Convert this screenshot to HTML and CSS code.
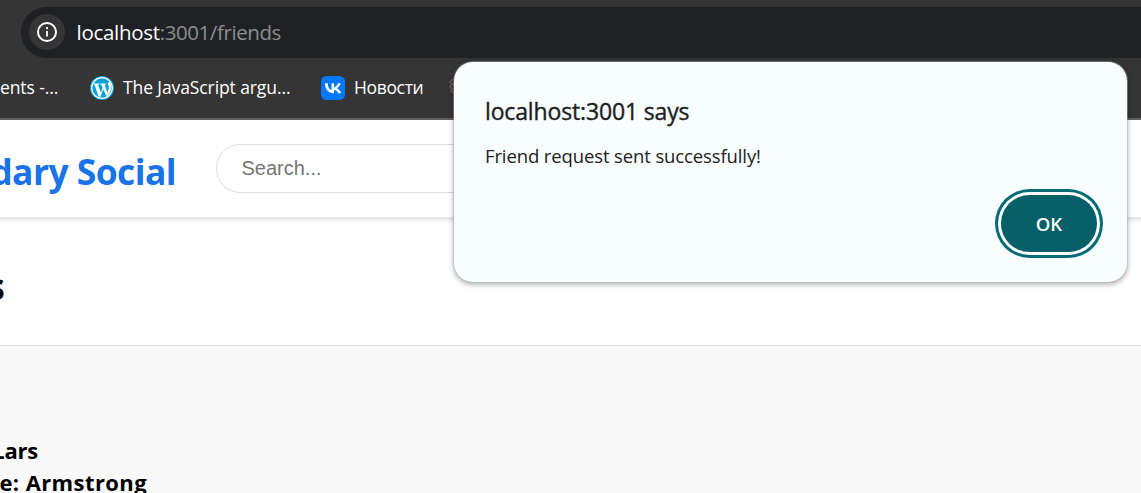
FILE: index.html
```html
<!DOCTYPE html>
<html lang="en">
<head>
<meta charset="utf-8">
<title>Friends</title>
<link rel="stylesheet" href="styles.css">
</head>
<body>
<div class="browser">
  <div class="address-bar">
    <span class="site-info">
      <svg width="22" height="22" viewBox="0 0 22 22"><circle cx="11" cy="11" r="9" fill="none" stroke="#fff" stroke-width="2"/><path d="M11 10v5.5M11 6v2.2" stroke="#fff" stroke-width="1.8"/></svg>
    </span>
    <span class="url"><span class="host">localhost</span><span class="path">:3001/friends</span></span>
  </div>
  <div class="bookmarks">
    <span class="bookmark bookmark-cut"><span class="label">ents -...</span></span>
    <span class="bookmark bookmark-wp">
      <svg width="24" height="24" viewBox="0 0 24 24"><circle cx="12" cy="12" r="12" fill="#0aa0d8"/><circle cx="12" cy="12" r="10.3" fill="none" stroke="#fff" stroke-width="1.2"/><path d="M3.6 7.5h5.700v1H8l3 8.300 1.700-4.800L11.300 8.500H10v-1h6v1h-1.500l3 8.300 1.300-4.200c.7-2.200-.9-3.200-.9-4.800 0-1.200.8-1.900 1.700-2 2 3 2.200 7.500.4 10.600-.8 1.500-2 2.700-3.500 3.500L13.200 13.500 10.400 21 8.400 20.200 4.500 8.500h-.9z" fill="#fff"/></svg>
      <span class="label">The JavaScript argu...</span>
    </span>
    <span class="bookmark bookmark-vk">
      <svg width="24" height="24" viewBox="0 0 24 24"><rect width="24" height="24" rx="5.5" fill="#0077ff"/><path d="M12.800 17.300C7.300 17.300 4.200 13.500 4 7.300h2.800c.1 4.500 2.100 6.400 3.700 6.800V7.300h2.600v3.900c1.600-.2 3.200-1.900 3.800-3.900h2.600c-.4 2.400-2.200 4.200-3.500 4.900 1.300.6 3.300 2.200 4.100 5.100h-2.900c-.6-1.900-2.100-3.400-4.100-3.600v3.600z" fill="#fff"/></svg>
      <span class="label">Новости</span>
    </span>
    <svg class="next-icon" width="24" height="24" viewBox="0 0 24 24"><path d="M5 3L2 6l2 2-2 3 2 2-1 2 3 2M7 5L5 8l2 3-1 3" fill="none" stroke="#625a5d" stroke-width="1.5"/></svg>
  </div>
</div>
<header class="site-header">
  <div class="brand">Legendary Social</div>
  <input class="search" type="text" placeholder="Search...">
</header>
<section class="title-row"><h1>Friends</h1></section>
<main class="friends">
  <p class="first-name">Name: Lars</p>
  <p class="last-name">Surname: Armstrong</p>
</main>
<div class="dialog" role="alertdialog">
  <h2>localhost:3001 says</h2>
  <p>Friend request sent successfully!</p>
  <div class="actions"><button class="ok">OK</button></div>
</div>
</body>
</html>
```
FILE: styles.css
```css
* { box-sizing: border-box; }
body {
  margin: 0;
  width: 1141px;
  height: 493px;
  overflow: hidden;
  display: flex;
  flex-direction: column;
  background: #fff;
  font-family: "Open Sans", "Noto Sans", sans-serif;
  white-space: nowrap;
}
.browser {
  flex: none;
  height: 120px;
  padding-top: 7px;
  background: #353535;
  border-bottom: 2px solid #656162;
}
.address-bar {
  display: flex;
  align-items: center;
  gap: 12px;
  height: 51px;
  margin-left: 21px;
  padding: 0 0 1px 7.500px;
  border-radius: 26px 0 0 26px;
  background: #202124;
}
.site-info {
  display: flex;
  align-items: center;
  justify-content: center;
  width: 36px;
  height: 36px;
  border-radius: 50%;
  background: #353535;
}
.url { display: flex; padding-bottom: 1px; font-size: 20.5px; }
.host { color: #fff; letter-spacing: -0.3px; }
.path { color: #8c8d8f; letter-spacing: -0.42px; }
.bookmarks { display: flex; align-items: center; height: 60px; color: #fff; font-size: 17.5px; }
.bookmark { display: flex; align-items: center; flex: none; gap: 9px; }
.bookmark-cut { width: 90px; }
.bookmark-wp { width: 231px; }
.bookmark-vk { width: 127px; }
.bookmark .label { padding-bottom: 2px; letter-spacing: -0.1px; }
.bookmark-vk .label { letter-spacing: -0.35px; }
.site-header {
  flex: none;
  display: flex;
  align-items: center;
  gap: 40px;
  height: 97px;
  margin: 0 -20px;
  padding: 0 20px;
  background: #fff;
  box-shadow: 0 3px 5px rgba(0, 0, 0, 0.13);
}
.brand {
  flex: none;
  display: flex;
  justify-content: flex-end;
  width: 176px;
  padding-top: 4px;
  color: #1a73e8;
  font-size: 35.5px;
  font-weight: 700;
  letter-spacing: -0.6px;
}
.search {
  width: 450px;
  height: 49px;
  padding: 0 24.5px;
  border: 1px solid #ddd;
  border-radius: 25px;
  outline: none;
  font: 20px "Liberation Sans", Arial, sans-serif;
}
.search::placeholder { color: #757575; }
.title-row { flex: none; height: 128px; padding-top: 44px; }
.title-row h1 {
  display: flex;
  justify-content: flex-end;
  width: 5px;
  margin: 0;
  font-size: 38px;
  line-height: 49px;
}
.friends {
  flex: 1;
  padding-top: 88px;
  border-top: 1px solid #ddd;
  background: #f9f9f9;
  font-size: 22px;
  font-weight: 700;
  line-height: 32px;
}
.friends p { display: flex; justify-content: flex-end; margin: 0; }
.first-name { width: 38px; letter-spacing: -0.2px; }
.last-name { width: 147px; letter-spacing: 0.4px; }
.dialog {
  position: absolute;
  left: 454px;
  top: 62px;
  width: 673px;
  height: 220px;
  padding: 32px 30px 0 31px;
  border-radius: 19px;
  background: #f8fefe;
  box-shadow: 0 0 0 1px rgba(170, 180, 180, 0.45), 0 2px 5px 1px rgba(0, 0, 0, 0.28);
}
.dialog h2 {
  margin: 0;
  color: #1f1f1f;
  font-size: 23px;
  font-weight: 500;
  line-height: 34px;
  letter-spacing: -0.15px;
  -webkit-text-stroke: 0.4px #1f1f1f;
}
.dialog p {
  margin: 14px 0 0;
  color: #222;
  font-size: 18.5px;
  line-height: 28px;
  letter-spacing: -0.12px;
}
.actions { display: flex; justify-content: flex-end; margin-top: 25px; }
.ok {
  width: 96px;
  height: 57px;
  border: 0;
  border-radius: 29px;
  background: #045f68;
  box-shadow: 0 0 0 3px #fff, 0 0 0 6px #066b75;
  color: #fff;
  font: 600 18.5px "Open Sans", "Noto Sans", sans-serif;
}
```
